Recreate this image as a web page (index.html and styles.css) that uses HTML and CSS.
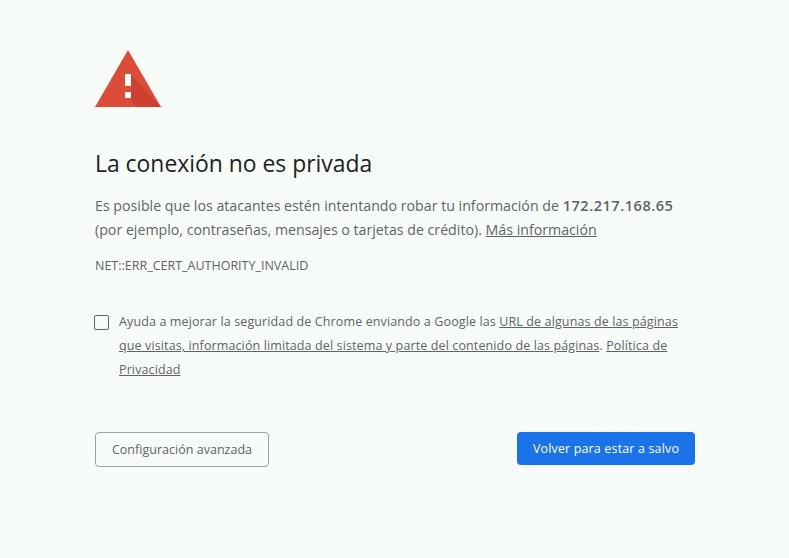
FILE: index.html
```html
<!DOCTYPE html>
<html lang="es">
<head>
<meta charset="utf-8">
<title>Error de privacidad</title>
<link rel="stylesheet" href="styles.css">
</head>
<body>
<main class="wrapper">
  <svg class="icon" width="66" height="58" viewBox="0 0 66 58" aria-hidden="true">
    <path d="M33 0 L66 57 H0 Z" fill="#dd4b39"/>
    <path d="M36 24.5 L65.9 57 H41 L36 51 Z" fill="#c53929" opacity=".6"/>
    <rect x="30" y="24" width="6" height="12" fill="#fff"/>
    <rect x="30" y="42" width="6" height="6" fill="#fff"/>
  </svg>
  <h1 class="title">La conexión no es privada</h1>
  <p class="message">Es posible que los atacantes estén intentando robar tu información de <strong>172.217.168.65</strong><br>(por ejemplo, contraseñas, mensajes o tarjetas de crédito). <a href="#">Más información</a></p>
  <p class="code">NET::ERR_CERT_AUTHORITY_INVALID</p>
  <div class="optin">
    <span class="checkbox"></span>
    <p class="optin-text">Ayuda a mejorar la seguridad de Chrome enviando a Google las <a href="#">URL de algunas de las páginas que visitas, información limitada del sistema y parte del contenido de las páginas</a>. <a href="#">Política de Privacidad</a></p>
  </div>
  <div class="actions">
    <button class="btn btn-secondary" type="button">Configuración avanzada</button>
    <button class="btn btn-primary" type="button">Volver para estar a salvo</button>
  </div>
</main>
</body>
</html>
```
FILE: styles.css
```css
html, body { margin: 0; padding: 0; }
body {
  background: #f7fcf9;
  font-family: "Open Sans", "Noto Sans", sans-serif;
  color: #5f6368;
}
.wrapper {
  width: 600px;
  margin-left: 95px;
  padding-top: 50px;
}
.icon { display: block; }
.title {
  margin: 41px 0 0;
  font-size: 22.9px;
  font-weight: 400;
  line-height: 30px;
  color: #202124;
}
.message {
  margin: 14px 0 0;
  font-size: 14.2px;
  line-height: 24px;
  color: #5f6368;
}
.message strong { font-weight: 600; font-size: 14.6px; letter-spacing: .5px; }
a { color: inherit; text-decoration: underline; }
.code {
  margin: 16px 0 0;
  font-size: 12.5px;
  line-height: 16px;
  color: #5f6368;
}
.optin {
  display: flex;
  gap: 10px;
  margin-top: 36px;
  margin-left: -1px;
}
.checkbox {
  flex: none;
  width: 13px;
  height: 13px;
  margin-top: 5px;
  border: 1px solid #5f6368;
  border-radius: 2px;
}
.optin-text {
  margin: 0;
  width: 572px;
  font-size: 12.5px;
  line-height: 24px;
  letter-spacing: .12px;
}
.actions {
  display: flex;
  justify-content: space-between;
  margin-top: 50px;
}
.btn {
  height: 35px;
  border-radius: 4px;
  font-family: inherit;
  font-size: 12.5px;
  letter-spacing: .15px;
  padding: 0;
}
.btn-secondary {
  width: 174px;
  background: transparent;
  border: 1px solid #9aa0a6;
  color: #5f6368;
  letter-spacing: .02px;
}
.btn-primary {
  width: 178px;
  height: 33px;
  background: #1a73e8;
  border: 0;
  color: #fff;
}
```
